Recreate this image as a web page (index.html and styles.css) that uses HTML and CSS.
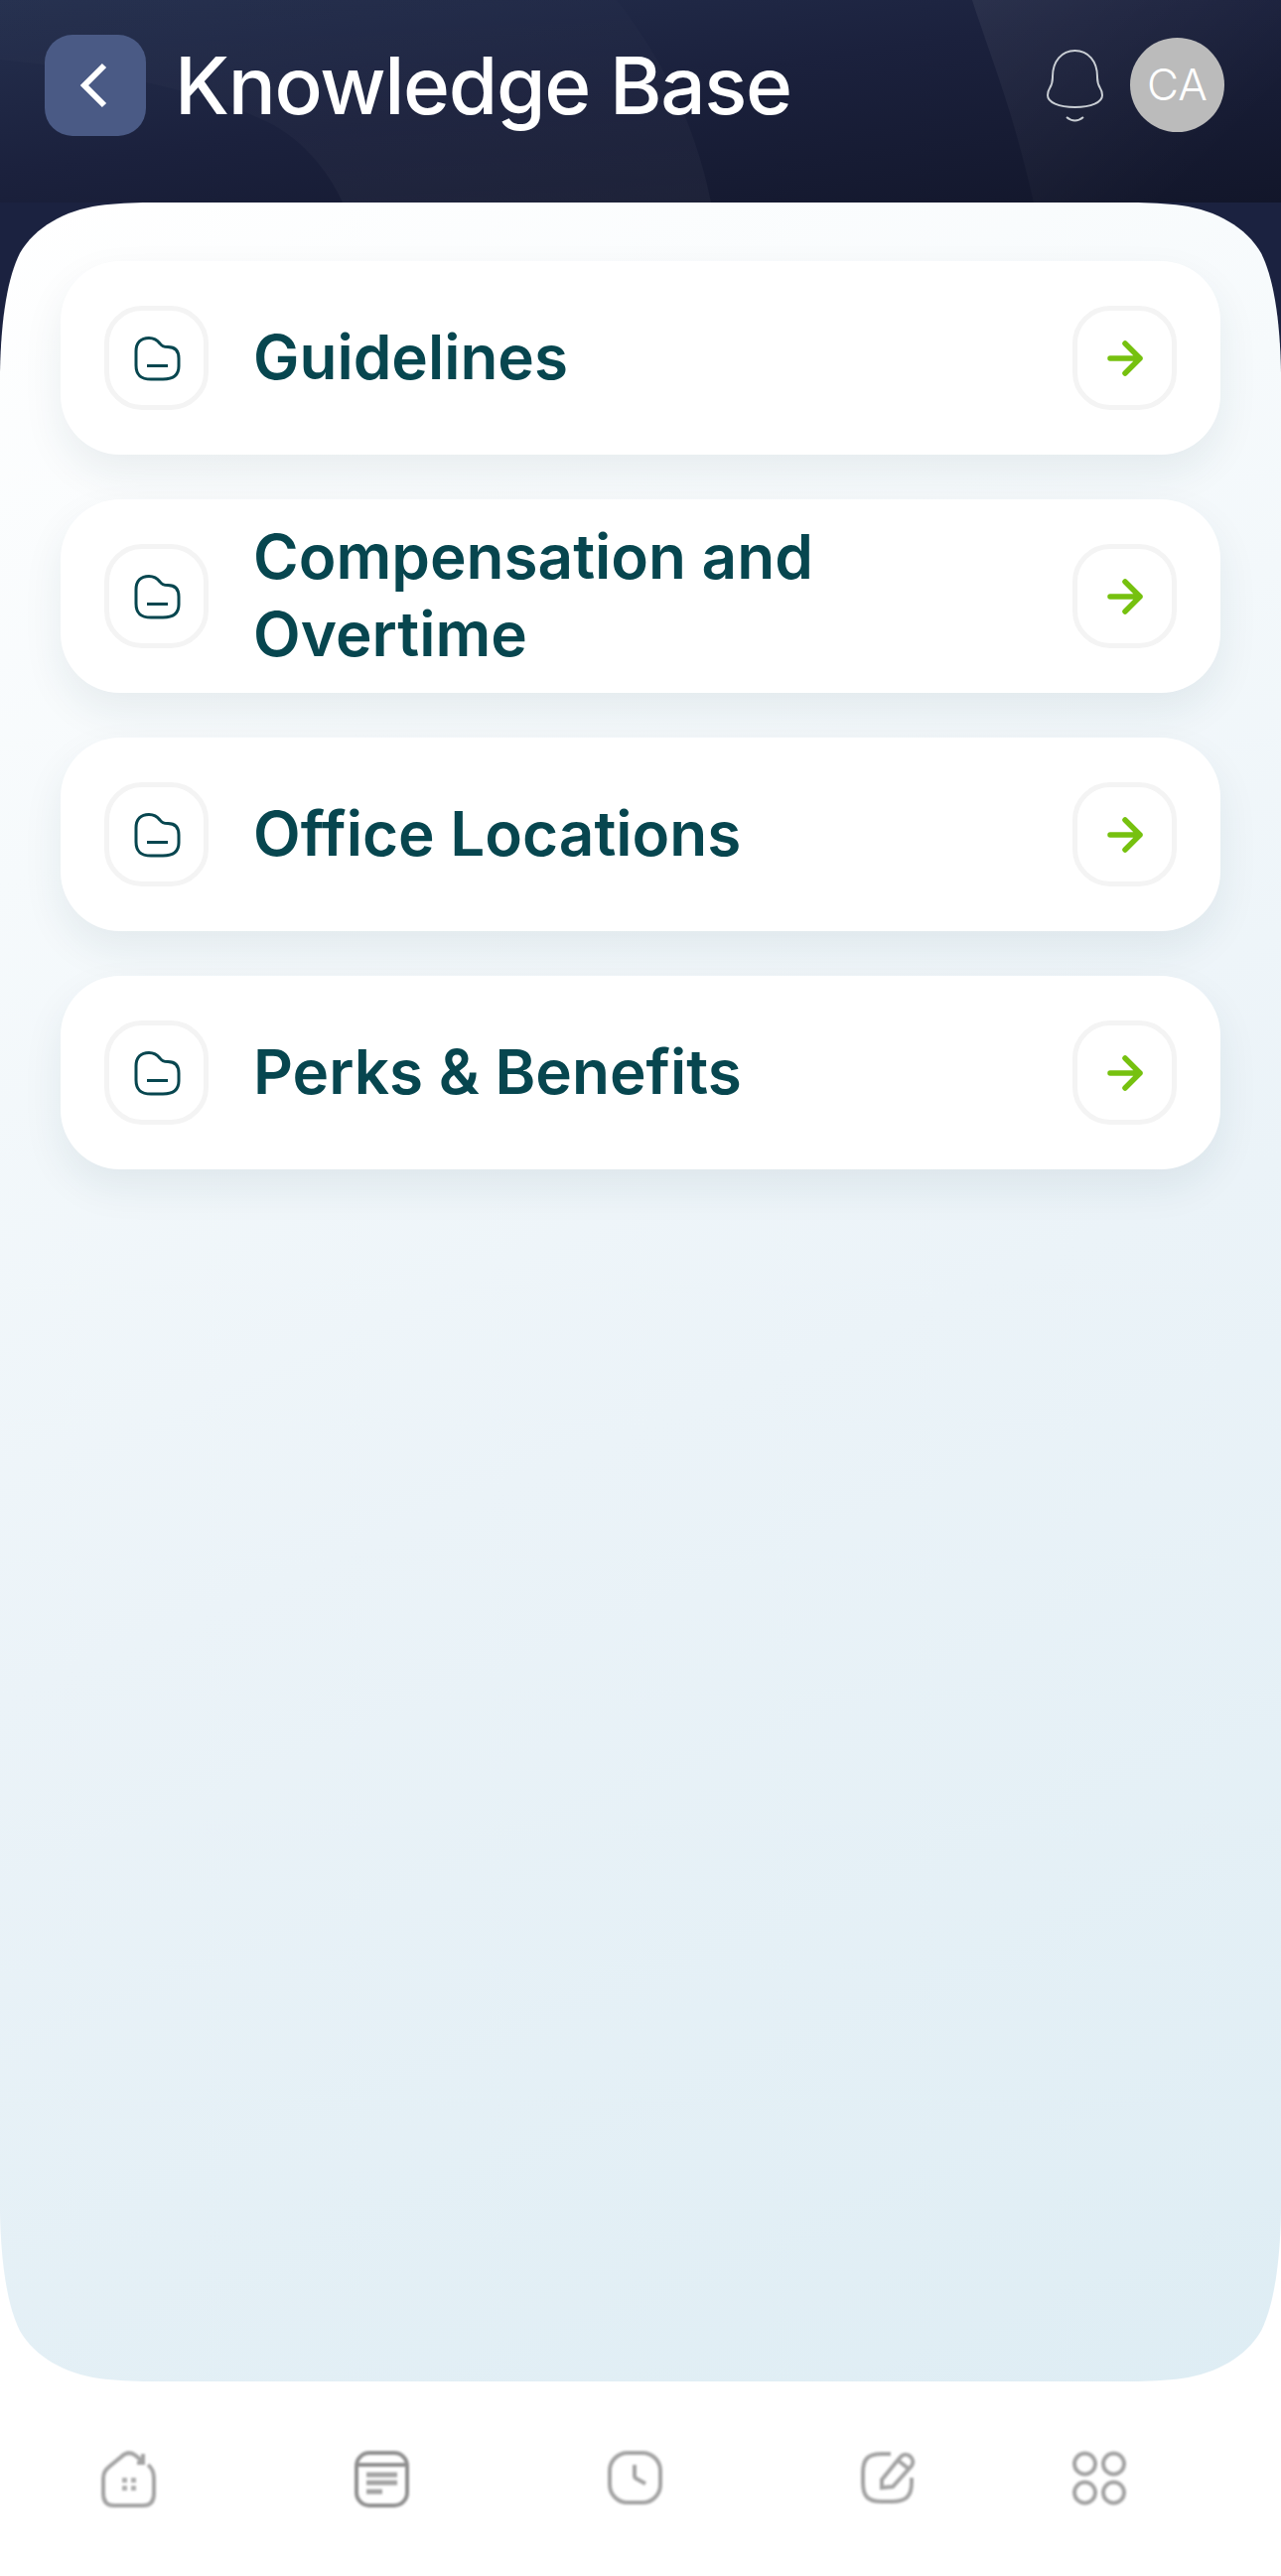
FILE: index.html
```html
<!DOCTYPE html>
<html lang="en">
<head>
    <meta charset="UTF-8">
    <meta name="viewport" content="width=device-width, initial-scale=1.0">
    <title>Knowledge Base</title>
    <link rel="stylesheet" href="styles.css">
</head>
<body>
    <header class="header">
        <svg class="header-shapes" viewBox="0 0 1290 204" preserveAspectRatio="none" aria-hidden="true">
            <defs>
                <linearGradient id="swoosh-a" x1="0.7" y1="0" x2="0.9" y2="1">
                    <stop offset="0" stop-color="#fff" stop-opacity="0.008"/>
                    <stop offset="1" stop-color="#fff" stop-opacity="0.035"/>
                </linearGradient>
                <linearGradient id="swoosh-b" x1="0" y1="0" x2="0.9" y2="0.6">
                    <stop offset="0" stop-color="#fff" stop-opacity="0.06"/>
                    <stop offset="1" stop-color="#fff" stop-opacity="0"/>
                </linearGradient>
            </defs>
            <path d="M621 0C660 50 700 120 716 204H345C330 170 300 135 263 120C200 90 100 70 0 60V0Z" fill="url(#swoosh-a)"/>
            <path d="M979 0C995 50 1020 110 1041 204H1290V0Z" fill="url(#swoosh-b)"/>
        </svg>
        <button class="back-button" aria-label="Back">
            <svg width="28" height="46" viewBox="0 0 28 46">
                <path d="M25 3L5 23L25 43" fill="none" stroke="#fff" stroke-width="6"/>
            </svg>
        </button>
        <h1 class="title">Knowledge Base</h1>
        <div class="header-right">
            <svg class="bell" width="57" height="74" viewBox="0 0 57 74">
                <path d="M28.5 1C15 1 6 12 6 27V28C6 32 5.5 35 3 39C1 42 1 44 1 46C1 53 12 58 28.5 58C45 58 56 53 56 46C56 44 56 42 54 39C51.5 35 51 32 51 28V27C51 12 42 1 28.5 1Z" fill="none" stroke="#c9ced4" stroke-width="2"/>
                <path d="M20 68Q28.5 75 37 68" fill="none" stroke="#c9ced4" stroke-width="2"/>
            </svg>
            <div class="avatar">CA</div>
        </div>
    </header>

    <div class="panel-wrap">
        <main class="panel">
            <a class="card">
                <span class="icon-box">
                    <svg width="48" height="46" viewBox="0 0 48 46"><use href="#folder"/></svg>
                </span>
                <span class="card-title">Guidelines</span>
                <span class="icon-box">
                    <svg width="36" height="36" viewBox="0 0 36 36"><use href="#arrow"/></svg>
                </span>
            </a>
            <a class="card">
                <span class="icon-box">
                    <svg width="48" height="46" viewBox="0 0 48 46"><use href="#folder"/></svg>
                </span>
                <span class="card-title">Compensation and Overtime</span>
                <span class="icon-box">
                    <svg width="36" height="36" viewBox="0 0 36 36"><use href="#arrow"/></svg>
                </span>
            </a>
            <a class="card">
                <span class="icon-box">
                    <svg width="48" height="46" viewBox="0 0 48 46"><use href="#folder"/></svg>
                </span>
                <span class="card-title">Office Locations</span>
                <span class="icon-box">
                    <svg width="36" height="36" viewBox="0 0 36 36"><use href="#arrow"/></svg>
                </span>
            </a>
            <a class="card">
                <span class="icon-box">
                    <svg width="48" height="46" viewBox="0 0 48 46"><use href="#folder"/></svg>
                </span>
                <span class="card-title">Perks &amp; Benefits</span>
                <span class="icon-box">
                    <svg width="36" height="36" viewBox="0 0 36 36"><use href="#arrow"/></svg>
                </span>
            </a>
        </main>
    </div>

    <nav class="nav">
        <svg class="nav-icon" width="55" height="57" viewBox="0 0 55 57">
            <path d="M47 14C51 17 53 22 53 28V43C53 51 49 55 42 55H13C6 55 2 51 2 43V28C2 22 4 19 9 15L20 6C25 1 30 1 35 5L42 11M42 3V12H36"/>
            <path class="dots" d="M21 27h5v5h-5zM30 27h5v5h-5zM21 35h5v5h-5zM30 35h5v5h-5z"/>
        </svg>
        <svg class="nav-icon notes" width="55" height="57" viewBox="0 0 55 57">
            <rect x="2" y="2" width="51" height="53" rx="13"/>
            <path d="M2 14H53"/>
            <path class="thick" d="M12 24H43M12 32H43M12 41H28"/>
        </svg>
        <svg class="nav-icon" width="55" height="54" viewBox="0 0 55 54">
            <rect x="2" y="2" width="51" height="50" rx="18"/>
            <path d="M27 14V25Q27 27 29 28L38 33"/>
        </svg>
        <svg class="nav-icon" width="57" height="54" viewBox="0 0 57 54">
            <path d="M31 3H22C8 3 3 8 3 22V32C3 46 8 51 22 51H32C46 51 52 46 52 32V27"/>
            <path d="M22 37V29L40 7C43 3 47 3 50 5C54 8 54 12 52 15L33 36ZM39 10L49 18"/>
        </svg>
        <svg class="nav-icon" width="54" height="55" viewBox="0 0 54 55">
            <circle cx="12.5" cy="13" r="10.5"/>
            <circle cx="41.5" cy="13" r="10.5"/>
            <circle cx="12.5" cy="42" r="10.5"/>
            <circle cx="41.5" cy="42" r="10.5"/>
        </svg>
    </nav>

    <svg class="sprites" width="0" height="0" aria-hidden="true">
        <symbol id="folder" viewBox="0 0 48 46">
            <path d="M3 16C3 7 8 2.5 16 2.5C21 2.5 24 4 27 8C29 11 32 11.5 35 11.5C42 11.5 46 15 46 23V31C46 40 40 44 30 44H18C8 44 3 40 3 30Z" fill="none" stroke="#07464f" stroke-width="3"/>
            <path d="M14 30.5H35" fill="none" stroke="#07464f" stroke-width="3"/>
        </symbol>
        <symbol id="arrow" viewBox="0 0 36 36">
            <path d="M3 18H33M18 3L33 18L18 33" fill="none" stroke="#76c10f" stroke-width="5.5" stroke-linecap="round" stroke-linejoin="round"/>
        </symbol>
    </svg>
</body>
</html>
```

FILE: styles.css
```css
body {
    margin: 0;
    width: 1290px;
    height: 2595px;
    overflow: hidden;
    background: #fff;
    font-family: 'Inter', sans-serif;
}
.header {
    position: relative;
    height: 204px;
    box-sizing: border-box;
    padding: 35px 57px 0 45px;
    display: flex;
    align-items: flex-start;
    background: linear-gradient(172deg, #25304f 0%, #1b213d 45%, #12162a 100%);
}
.header-shapes {
    position: absolute;
    left: 0;
    top: 0;
    width: 100%;
    height: 100%;
}
.back-button {
    position: relative;
    width: 102px;
    height: 102px;
    padding: 0;
    border: none;
    border-radius: 28px;
    background: #4a5a85;
    display: flex;
    align-items: center;
    justify-content: center;
}
.back-button svg {
    margin-right: 4px;
}
.title {
    position: relative;
    margin: 0 0 0 29px;
    font-size: 80px;
    line-height: 102px;
    font-weight: 500;
    letter-spacing: -1.3px;
    color: #fff;
}
.header-right {
    position: relative;
    margin-left: auto;
    display: flex;
    align-items: flex-start;
    gap: 27px;
}
.bell {
    margin-top: 15px;
}
.avatar {
    width: 95px;
    height: 95px;
    margin-top: 3px;
    border-radius: 50%;
    background: #bbb;
    color: #fff;
    font-size: 44px;
    font-weight: 300;
    line-height: 95px;
    text-align: center;
}
.panel-wrap {
    background: linear-gradient(#1b2240 0, #1b2240 175px, #fff 175px);
}
.panel {
    height: 2195px;
    box-sizing: border-box;
    padding: 59px 61px 0;
    display: flex;
    flex-direction: column;
    gap: 45px;
    clip-path: path("M0 171C1 115 8 75 20 51C35 25 65 8 100 3C115 1 135 0 150 0H1140C1155 0 1175 1 1190 3C1225 8 1255 25 1270 51C1282 75 1289 115 1290 171V2024C1289 2080 1282 2120 1270 2144C1255 2170 1225 2187 1190 2192C1175 2194 1155 2195 1140 2195H150C135 2195 115 2194 100 2192C65 2187 35 2170 20 2144C8 2120 1 2080 0 2024Z");
    background: linear-gradient(157deg, #fff 0%, #f6fafc 25%, #ebf3f8 55%, #deedf4 100%);
}
.card {
    height: 195px;
    flex: none;
    box-sizing: border-box;
    padding: 0 44px;
    display: flex;
    align-items: center;
    border-radius: 60px;
    background: #fff;
    box-shadow: 0 18px 40px rgba(20, 60, 80, 0.08);
}
.icon-box {
    width: 105px;
    height: 105px;
    flex: none;
    box-sizing: border-box;
    border: 5px solid #f4f4f4;
    border-radius: 38px;
    display: flex;
    align-items: center;
    justify-content: center;
}
.card-title {
    flex: 1;
    margin-left: 45px;
    padding-right: 200px;
    padding-bottom: 2px;
    font-size: 62px;
    line-height: 78px;
    font-weight: 600;
    color: #07464f;
}
.nav {
    padding: 70px 0 0 2px;
    display: grid;
    grid-template-columns: repeat(4, 255px) 170px;
    justify-items: center;
    align-items: start;
}
.nav-icon {
    filter: blur(1px);
}
.nav-icon path,
.nav-icon rect,
.nav-icon circle {
    fill: none;
    stroke: #a3a3a3;
    stroke-width: 4;
}
.nav-icon path.dots {
    fill: #b0b0b0;
    stroke: none;
}
.notes rect,
.notes path {
    stroke: #8f8f8f;
}
.nav-icon path.thick {
    stroke: #a3a3a3;
    stroke-width: 5;
}
.sprites {
    position: absolute;
}
```
